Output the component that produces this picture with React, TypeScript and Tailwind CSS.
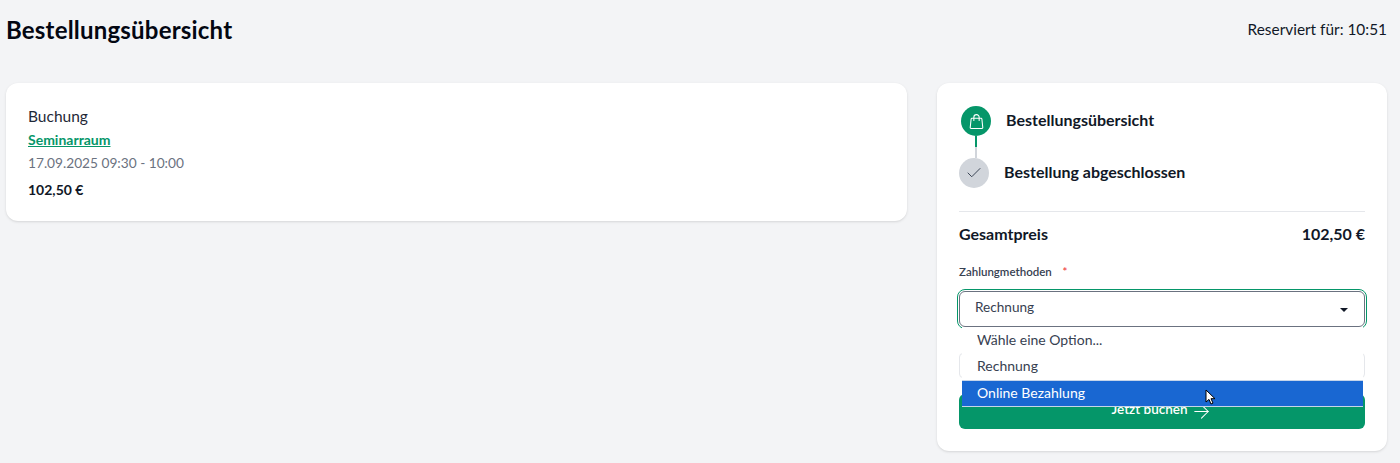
import React from "react";
import { ArrowRight, Check } from "lucide-react";

const Step: React.FC<{ done?: boolean; label: string }> = ({ done, label }) => (
  <div className={done ? "flex items-center gap-[15px] pl-[2px]" : "flex items-center gap-[15px]"}>
    <div
      className={
        done
          ? "w-[30px] h-[30px] rounded-full bg-[#059669] flex items-center justify-center text-white"
          : "w-[30px] h-[30px] rounded-full bg-[#d1d5db] flex items-center justify-center text-[#374151]"
      }
    >
      {done ? (
        <svg width="17" height="17" viewBox="0 0 24 24" fill="none" stroke="currentColor" strokeWidth={1.5} strokeLinecap="round" strokeLinejoin="round">
          <path d="M15.75 10.5V6a3.75 3.75 0 1 0-7.5 0v4.5m11.356-1.993 1.263 12c.07.665-.45 1.243-1.119 1.243H4.25a1.125 1.125 0 0 1-1.12-1.243l1.264-12A1.125 1.125 0 0 1 5.513 7.5h12.974c.576 0 1.059.435 1.119 1.007Z" />
        </svg>
      ) : (
        <Check size={18} strokeWidth={1.3} />
      )}
    </div>
    <span className={done ? "mb-[3px] text-[16px] font-bold text-[#111827]" : "mb-[2px] text-[16px] font-bold text-[#111827]"}>{label}</span>
  </div>
);

export default function App() {
  return (
    <div className="h-[463px] overflow-hidden bg-[#f3f4f6] pl-[6px] pr-[13px] font-['Lato',sans-serif]">
      <div className="flex items-center justify-between h-[60px]">
        <h1 className="text-[24px] font-bold tracking-[0.2px] text-[#030712]">Bestellungsübersicht</h1>
        <span className="text-[15.4px] text-[#111827]">Reserviert für: 10:51</span>
      </div>

      <div className="flex items-start gap-[30px] mt-[23px]">
        <div className="w-[901px] h-[138px] bg-white rounded-xl shadow px-[22px] pt-[22px]">
          <p className="text-[15.5px] leading-[22px] text-[#1f2937]">Buchung</p>
          <a className="block text-[14px] leading-[20px] mt-[3px] font-bold text-[#059669] underline">Seminarraum</a>
          <p className="text-[13.7px] leading-[20px] mt-[3px] text-[#6b7280]">17.09.2025 09:30 - 10:00</p>
          <p className="text-[14px] leading-[20px] mt-[7px] font-bold text-[#111827]">102,50 €</p>
        </div>

        <div className="relative w-[450px] h-[368px] bg-white rounded-xl shadow px-[22px] pt-[23px]">
          <div className="relative flex flex-col gap-[22px]">
            <Step done label="Bestellungsübersicht" />
            <Step label="Bestellung abgeschlossen" />
            <div className="absolute left-[16px] top-[30px] w-[2px] h-[11px] bg-[#059669]" />
            <div className="absolute left-[16px] top-[41px] w-[2px] h-[11px] bg-[#d1d5db]" />
          </div>

          <div className="h-px bg-[#e5e7eb] mt-[23px]" />
          <div className="flex justify-between items-center mt-[10px] text-[16px] font-bold text-[#111827]">
            <span>Gesamtpreis</span>
            <span>102,50 €</span>
          </div>

          <div className="mt-[18px] text-[11.5px] leading-[16px] font-semibold text-[#374151]">
            Zahlungmethoden <span className="text-[#ef4444] ml-[8px]">*</span>
          </div>

          <div className="mt-[11px] h-[36px] rounded-[6px] border border-[#6b7280] bg-white outline-[1.5px] outline-solid outline-[#059669] outline-offset-[1px] flex items-center justify-between pl-[15px] pr-[16px] pb-[3px] text-[13.6px] text-[#374151]">
            <span>Rechnung</span>
            <span className="w-0 h-0 border-x-[4px] border-x-transparent border-t-[4px] border-t-[#111827] mt-[5px]" />
          </div>

          <div className="h-[25px] mt-[26px] rounded border border-[#e5e7eb]" />

          <button className="w-full h-[35px] mt-[16px] rounded-md bg-[#059669] text-white text-[13.5px] font-semibold flex items-center justify-center gap-[3px]">
            <span className="mb-[5px]">Jetzt buchen</span> <ArrowRight className="mb-[1px] -ml-[1px]" size={23} strokeWidth={1.1} />
          </button>

          <div className="absolute left-[25px] top-[244px] w-[401px] bg-white text-[14px] text-[#374151]">
            <div className="h-[26px] px-[15px] pb-[2px] flex items-center">Wähle eine Option...</div>
            <div className="h-[27px] px-[15px] pb-[2px] flex items-center">Rechnung</div>
            <div className="h-[27px] px-[15px] pb-[2px] flex items-center bg-[#1967d2] border-y border-[#c6d5ea] text-white">Online Bezahlung</div>
            <svg className="absolute left-[243px] top-[62px]" width="11" height="16" viewBox="0 0 11 16">
              <path d="M1 1v12l3-2.6L6 15l2-.9-2-4.4h4z" fill="#fff" stroke="#000" strokeWidth="1" strokeLinejoin="round" />
            </svg>
          </div>
        </div>
      </div>
    </div>
  );
}
